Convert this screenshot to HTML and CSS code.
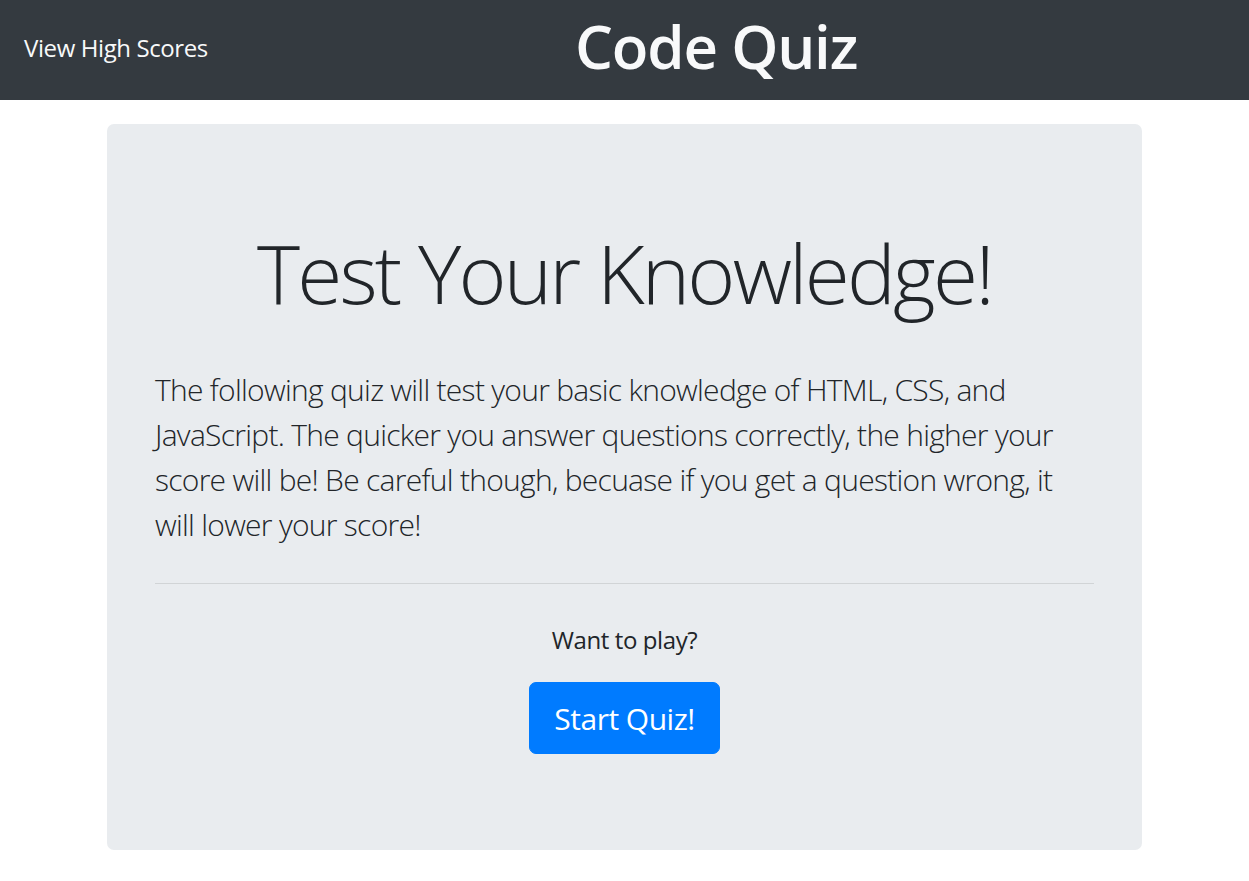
FILE: index.html
```html
<!DOCTYPE html>
<html lang="en">
<head>
<meta charset="utf-8">
<title>Code Quiz</title>
<link rel="stylesheet" href="styles.css">
</head>
<body>
<header class="topbar">
  <a class="scores-link" href="#">View High Scores</a>
  <h1 class="site-title">Code Quiz</h1>
</header>
<main class="container">
  <section class="jumbotron">
    <h2 class="display">Test Your Knowledge!</h2>
    <p class="lead">The following quiz will test your basic knowledge of HTML, CSS, and JavaScript. The quicker you answer questions correctly, the higher your score will be! Be careful though, becuase if you get a question wrong, it will lower your score!</p>
    <hr class="divider">
    <div class="play">
      <p class="play-text">Want to play?</p>
      <button class="btn-start" type="button">Start Quiz!</button>
    </div>
  </section>
</main>
</body>
</html>
```
FILE: styles.css
```css
* { box-sizing: border-box; }
html, body { margin: 0; padding: 0; }
body {
  font-family: "Open Sans", "Noto Sans", sans-serif;
  font-size: 24px;
  line-height: 1.5;
  color: #212529;
  background: #fff;
}
.topbar {
  height: 100px;
  background: #343a40;
  display: grid;
  grid-template-columns: 575px auto;
  align-items: center;
}
.scores-link {
  padding-left: 24px;
  margin-bottom: 4px;
  color: #f8f9fa;
  text-decoration: none;
  font-size: 24px;
  letter-spacing: -0.4px;
}
.site-title {
  margin: 0 0 9px;
  color: #f8f9fa;
  font-size: 60px;
  font-weight: 600;
  line-height: 1.2;
  letter-spacing: -1.2px;
}
.container {
  width: 1035px;
  margin: 24px 0 0 107px;
}
.jumbotron {
  background: #e9ecef;
  border-radius: 7px;
  padding: 96px 48px;
}
.display {
  margin: 0 0 46px;
  padding-top: 4px;
  text-align: center;
  font-size: 82px;
  font-weight: 300;
  line-height: 97px;
  letter-spacing: -2.8px;
}
.lead {
  margin: 0 0 24px;
  font-size: 30px;
  font-weight: 300;
  line-height: 45px;
  letter-spacing: -0.72px;
}
.divider {
  margin: 36px 0;
  border: 0;
  border-top: 1.5px solid rgba(0,0,0,.1);
}
.play {
  text-align: center;
}
.play-text {
  margin: 0 0 24px;
  padding-top: 2px;
  font-size: 24px;
  line-height: 36px;
  letter-spacing: -0.4px;
}
.btn-start {
  font-family: inherit;
  font-size: 30px;
  line-height: 45px;
  padding: 12.5px 24px;
  border: 1px solid #007bff;
  background: #007bff;
  color: #fff;
  border-radius: 7px;
  letter-spacing: -0.5px;
  cursor: pointer;
}
```
